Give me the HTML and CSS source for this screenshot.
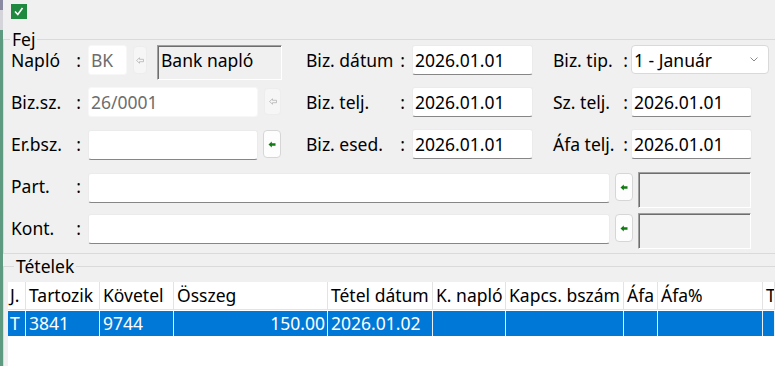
FILE: index.html
```html
<!doctype html>
<html>
<head>
<meta charset="utf-8">
<title>Bizonylat</title>
<link rel="stylesheet" href="styles.css">
</head>
<body>
<div class="strip"></div>
<div class="main">
    <div class="topbar">
        <span class="okbox"><svg width="16" height="15" viewBox="0 0 16 15"><polyline points="4,7.5 6.8,10.5 11.5,4" fill="none" stroke="#fff" stroke-width="1.6"/></svg></span>
    </div>

    <fieldset class="grp fej">
        <legend>Fej</legend>
        <div class="row">
            <div class="sec left">
                <label class="lbl">Napló<i>:</i></label>
                <input class="tb off short" value="BK" disabled>
                <button class="pick off narrow"><svg width="8" height="7" viewBox="0 0 8 7"><path d="M0.5 3.5 L3.5 0.8 V2.3 H7.5 V4.7 H3.5 V6.2 Z" fill="none" stroke="#b4b4b4" stroke-width="0.8"/></svg></button>
                <div class="sunk name">Bank napló</div>
            </div>
            <div class="sec mid">
                <label class="lbl">Biz. dátum<i>:</i></label>
                <input class="tb date" value="2026.01.01">
            </div>
            <div class="sec right">
                <label class="lbl">Biz. tip.<i>:</i></label>
                <div class="combo">1 - Január<svg width="8" height="5" viewBox="0 0 8 5"><polyline points="0.5,0.5 4,4 7.5,0.5" fill="none" stroke="#8a8a8a" stroke-width="1"/></svg></div>
            </div>
        </div>
        <div class="row">
            <div class="sec left">
                <label class="lbl">Biz.sz.<i>:</i></label>
                <input class="tb off mid-w" value="26/0001" disabled>
                <button class="pick off"><svg width="8" height="7" viewBox="0 0 8 7"><path d="M0.5 3.5 L3.5 0.8 V2.3 H7.5 V4.7 H3.5 V6.2 Z" fill="none" stroke="#b4b4b4" stroke-width="0.8"/></svg></button>
            </div>
            <div class="sec mid">
                <label class="lbl">Biz. telj.<i>:</i></label>
                <input class="tb date" value="2026.01.01">
            </div>
            <div class="sec right">
                <label class="lbl">Sz. telj.<i>:</i></label>
                <input class="tb date" value="2026.01.01">
            </div>
        </div>
        <div class="row">
            <div class="sec left">
                <label class="lbl">Er.bsz.<i>:</i></label>
                <input class="tb mid-w low" value="">
                <button class="pick low"><svg width="8" height="7" viewBox="0 0 8 7"><path d="M0.5 3.5 L3.8 0.5 V2.3 H7.5 V4.7 H3.8 V6.5 Z" fill="#127a12"/></svg></button>
            </div>
            <div class="sec mid">
                <label class="lbl">Biz. esed.<i>:</i></label>
                <input class="tb date" value="2026.01.01">
            </div>
            <div class="sec right">
                <label class="lbl">Áfa telj.<i>:</i></label>
                <input class="tb date" value="2026.01.01">
            </div>
        </div>
        <div class="row wide r4">
            <label class="lbl">Part.<i>:</i></label>
            <input class="tb long" value="">
            <button class="pick"><svg width="8" height="7" viewBox="0 0 8 7"><path d="M0.5 3.5 L3.8 0.5 V2.3 H7.5 V4.7 H3.8 V6.5 Z" fill="#127a12"/></svg></button>
            <div class="sunk info"></div>
        </div>
        <div class="row wide r5">
            <label class="lbl">Kont.<i>:</i></label>
            <input class="tb long" value="">
            <button class="pick"><svg width="8" height="7" viewBox="0 0 8 7"><path d="M0.5 3.5 L3.8 0.5 V2.3 H7.5 V4.7 H3.8 V6.5 Z" fill="#127a12"/></svg></button>
            <div class="sunk info"></div>
        </div>
    </fieldset>

    <fieldset class="grp items">
        <legend>Tételek</legend>
        <div class="tbl">
            <div class="tr head">
                <span>J.</span><span>Tartozik</span><span>Követel</span><span>Összeg</span><span>Tétel dátum</span><span>K. napló</span><span>Kapcs. bszám</span><span>Áfa</span><span>Áfa%</span><span>T</span>
            </div>
            <div class="tr sel">
                <span>T</span><span>3841</span><span>9744</span><span class="num">150.00</span><span>2026.01.02</span><span></span><span></span><span></span><span></span><span></span>
            </div>
        </div>
    </fieldset>
</div>
</body>
</html>
```

FILE: styles.css
```css
html,body{
    margin: 0;
    height: 100%;
}
body{
    background-color: #f0f0f0;
    font-family: "Noto Sans","Open Sans",sans-serif;
    font-size: 17.5px;
    color: #000;
    display: flex;
    overflow: hidden;
}
.strip{
    width: 3px;
    flex: none;
    background: linear-gradient(#8a89a2 0 10px,#d4d4da 10px 30px,#5e9a80 30px);
}
.main{
    flex: 1;
    min-width: 0;
    display: flex;
    flex-direction: column;
}
.topbar{
    height: 33px;
    flex: none;
}
.okbox{
    display: block;
    width: 16px;
    height: 15px;
    margin: 4px 0 0 8px;
    background-color: #1f8a3f;
}
.okbox svg{
    display: block;
}

/* group boxes */
.grp{
    margin: 0;
    padding: 0;
    border: 1px solid #dadada;
    border-right: none;
    min-width: 0;
}
.grp legend{
    margin-left: 6px;
    padding: 0 2px;
    line-height: 12px;
}
.fej{
    flex: none;
}
.items{
    flex: 1;
    min-height: 0;
    display: flex;
    flex-direction: column;
    margin-top: 6px;
    padding: 10px 0 0 4px;
    border-bottom: none;
}

/* form rows */
.row{
    display: flex;
    align-items: flex-start;
    height: 42px;
    padding-left: 7px;
}
.row:last-child{
    height: 40px;
}
.sec{
    display: flex;
    align-items: flex-start;
    flex: none;
}
.left{
    width: 295px;
}
.mid{
    width: 247px;
}
.lbl{
    display: flex;
    justify-content: space-between;
    align-items: center;
    height: 30px;
    width: 77px;
    padding-right: 7px;
    box-sizing: border-box;
    flex: none;
}
.lbl i{
    font-style: normal;
}
.mid .lbl{
    width: 106px;
}
.right .lbl{
    width: 78px;
    padding-right: 3px;
}

.tb{
    font: inherit;
    color: #000;
    height: 30px;
    box-sizing: border-box;
    margin: 0;
    padding: 0 2px;
    background-color: #fff;
    border: 1px solid #ebebeb;
    border-bottom-color: #868686;
    border-radius: 3px;
    outline: none;
    flex: none;
}
.tb.off{
    color: #6d6d6d;
    border-color: #f7f7f7;
}
.short{
    width: 39px;
}
.mid-w{
    width: 170px;
}
.date{
    width: 121px;
}
.long{
    width: 522px;
}
.low{
    margin-top: 1px;
}

.pick{
    display: flex;
    align-items: center;
    justify-content: center;
    width: 18px;
    height: 28px;
    margin: 1px 0 0 5px;
    padding: 0;
    background-color: #fdfdfd;
    border: 1px solid #d6d6d6;
    border-radius: 4px;
    flex: none;
}
.pick.off{
    width: 17px;
    height: 27px;
    margin-left: 6px;
    background-color: #f6f6f6;
    border-color: #ededed;
}
.pick.narrow{
    width: 14px;
    height: 28px;
}

.sunk{
    box-sizing: border-box;
    height: 35px;
    margin-left: 10px;
    padding: 0 0 0 3px;
    line-height: 29px;
    background-color: #f0f0f0;
    border: 1px solid #a0a0a0;
    border-right-color: #fff;
    border-bottom-color: #fff;
    box-shadow: inset 1px 1px 0 #6e6e6e;
    flex: none;
}
.name{
    width: 125px;
}
.info{
    width: 113px;
    height: 36px;
    margin-left: 5px;
}

.combo{
    display: flex;
    align-items: center;
    justify-content: space-between;
    box-sizing: border-box;
    width: 138px;
    height: 29px;
    padding: 0 10px 0 2px;
    background-color: #fff;
    border: 1px solid #d9d9d9;
    border-radius: 4px;
}

.r4 .tb,.r4 .pick{
    margin-top: 2px;
}
.r4 .sunk{
    margin-top: 1px;
}
.r5 .tb,.r5 .pick{
    margin-top: 1px;
}

/* items grid */
.tbl{
    flex: 1;
    min-height: 0;
    overflow: hidden;
    background-color: #fff;
}
.tr{
    display: grid;
    grid-template-columns: 18px 74px 74px 154px 105px 73px 118px 34px 105px minmax(0,1fr);
}
.tr span{
    box-sizing: border-box;
    padding-left: 2px;
    border-right: 1px solid #e3e3e3;
    white-space: nowrap;
    overflow: hidden;
}
.head{
    height: 28px;
    line-height: 27px;
    border-bottom: 1px solid #e3e3e3;
    box-sizing: border-box;
}
.sel{
    height: 25px;
    line-height: 25px;
    margin-top: 1px;
    background-color: #0078d7;
    color: #fff;
}
.sel span{
    border-right-color: #e8f1fa;
}
.tr span + span{
    padding-left: 3px;
}
.sel .num{
    text-align: right;
    padding-right: 2px;
}
```
